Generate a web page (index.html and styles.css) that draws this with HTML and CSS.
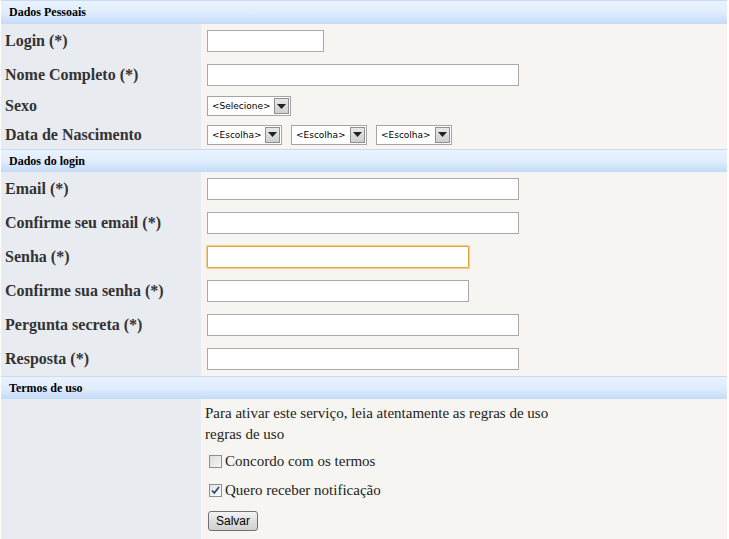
FILE: index.html
```html
<!DOCTYPE html>
<html lang="pt">
<head>
<meta charset="utf-8">
<title>Cadastro</title>
<link rel="stylesheet" href="styles.css">
</head>
<body>
<form class="form">
  <div class="section-head first">Dados Pessoais</div>
  <div class="row h34"><div class="label">Login (*)</div><div class="field"><input class="txt w117" type="text"></div></div>
  <div class="row h34"><div class="label">Nome Completo (*)</div><div class="field"><input class="txt w312" type="text"></div></div>
  <div class="row h28"><div class="label">Sexo</div><div class="field">
    <span class="sel w84"><span class="sel-text">&lt;Selecione&gt;</span><span class="sel-btn"><svg width="9" height="5" viewBox="0 0 9 5"><path d="M0 0h9L4.5 5z" fill="#222"/></svg></span></span>
  </div></div>
  <div class="row h29"><div class="label">Data de Nascimento</div><div class="field gap9">
    <span class="sel w75"><span class="sel-text">&lt;Escolha&gt;</span><span class="sel-btn"><svg width="9" height="5" viewBox="0 0 9 5"><path d="M0 0h9L4.5 5z" fill="#222"/></svg></span></span>
    <span class="sel w76"><span class="sel-text">&lt;Escolha&gt;</span><span class="sel-btn"><svg width="9" height="5" viewBox="0 0 9 5"><path d="M0 0h9L4.5 5z" fill="#222"/></svg></span></span>
    <span class="sel w76"><span class="sel-text">&lt;Escolha&gt;</span><span class="sel-btn"><svg width="9" height="5" viewBox="0 0 9 5"><path d="M0 0h9L4.5 5z" fill="#222"/></svg></span></span>
  </div></div>

  <div class="section-head">Dados do login</div>
  <div class="row h34"><div class="label">Email (*)</div><div class="field"><input class="txt w312" type="text"></div></div>
  <div class="row h34"><div class="label">Confirme seu email (*)</div><div class="field"><input class="txt w312" type="text"></div></div>
  <div class="row h34"><div class="label">Senha (*)</div><div class="field"><input class="txt w262 focus" type="password"></div></div>
  <div class="row h34"><div class="label">Confirme sua senha (*)</div><div class="field"><input class="txt w262" type="password"></div></div>
  <div class="row h34"><div class="label">Pergunta secreta (*)</div><div class="field"><input class="txt w312" type="text"></div></div>
  <div class="row h34"><div class="label">Resposta (*)</div><div class="field"><input class="txt w312" type="text"></div></div>

  <div class="section-head">Termos de uso</div>
  <div class="row terms"><div class="label"></div><div class="field col">
    <p class="terms-text">Para ativar este serviço, leia atentamente as regras de uso<br>regras de uso</p>
    <label class="check"><span class="box"></span>Concordo com os termos</label>
    <label class="check"><span class="box checked"><svg width="9" height="9" viewBox="0 0 9 9"><path d="M1 4.5l2.3 2.6L8 1" fill="none" stroke="#2a3f7a" stroke-width="1.6"/></svg></span>Quero receber notificação</label>
    <button type="button" class="btn">Salvar</button>
  </div></div>
</form>
</body>
</html>
```
FILE: styles.css
```css
html, body {
  margin: 0;
  padding: 0;
  background: #ffffff;
}
.form {
  margin: 0 0 0 1px;
  width: 726px;
  font-family: "Liberation Serif", "Times New Roman", serif;
}
.section-head {
  height: 23px;
  box-sizing: border-box;
  border-top: 1px solid #c6dbf7;
  background: linear-gradient(#eaf3fe, #e0edfd 50%, #c4dbf8);
  font: bold 12px "Liberation Serif", serif;
  color: #000;
  padding-left: 8px;
  display: flex;
  align-items: center;
}
.section-head.first {
  height: 24px;
}
.row {
  display: grid;
  grid-template-columns: 200px 1fr;
}
.h34 { height: 34px; }
.h28 { height: 28px; }
.h29 { height: 29px; }
.label {
  background: #e8ebf0;
  display: flex;
  align-items: center;
  padding-left: 4px;
  font-weight: bold;
  font-size: 16px;
  color: #333333;
}
.field {
  background: #f6f5f1;
  display: flex;
  align-items: center;
  padding-left: 6px;
}
.gap9 { gap: 9px; }
.txt {
  box-sizing: border-box;
  height: 22px;
  margin: 0;
  border: 1px solid #a9a9a9;
  background: #fff;
  padding: 0 3px;
  outline: none;
}
.txt.focus {
  border: 1px solid #e2a43c;
  box-shadow: 0 0 1px 1px #f1cd8a;
  border-radius: 1px;
}
.w117 { width: 117px; }
.w312 { width: 312px; }
.w262 { width: 262px; }
.w84 { width: 84px; }
.w75 { width: 75px; }
.w76 { width: 76px; }
.sel {
  box-sizing: border-box;
  height: 20px;
  border: 1px solid #a5a5a5;
  background: #fff;
  display: inline-flex;
  align-items: center;
  justify-content: space-between;
  padding: 1px;
}
.sel-text {
  font: 9px "DejaVu Sans", Verdana, sans-serif;
  color: #000;
  padding-left: 3px;
  white-space: nowrap;
}
.sel-btn {
  box-sizing: border-box;
  width: 15px;
  height: 16px;
  border: 1px solid #8f8f8f;
  background: linear-gradient(#e8e8e8, #cfcfcf);
  display: flex;
  align-items: center;
  justify-content: center;
}
.terms {
  min-height: 141px;
}
.field.col {
  flex-direction: column;
  align-items: flex-start;
  padding-left: 4px;
  padding-top: 4px;
}
.terms-text {
  margin: 0;
  font-size: 15px;
  line-height: 21px;
  color: #222;
}
.check {
  display: flex;
  align-items: center;
  gap: 3px;
  font-size: 15px;
  color: #222;
  margin-left: 4px;
  height: 29px;
}
.check:first-of-type { margin-top: 2px; }
.box {
  box-sizing: border-box;
  width: 13px;
  height: 13px;
  border: 1px solid #8e8f8f;
  background: linear-gradient(135deg, #dcdcdc, #f6f6f6);
  display: flex;
  align-items: center;
  justify-content: center;
}
.box.checked { background: linear-gradient(135deg, #e4e4e4, #fafafa); }
.btn {
  margin: 6px 0 0 3px;
  width: 50px;
  height: 20px;
  box-sizing: border-box;
  border: 1px solid #707070;
  border-radius: 3px;
  background: linear-gradient(#f4f4f4, #dedede 50%, #d0d0d0);
  font: 12px "Liberation Sans", Arial, sans-serif;
  color: #000;
  padding: 0;
}
```
